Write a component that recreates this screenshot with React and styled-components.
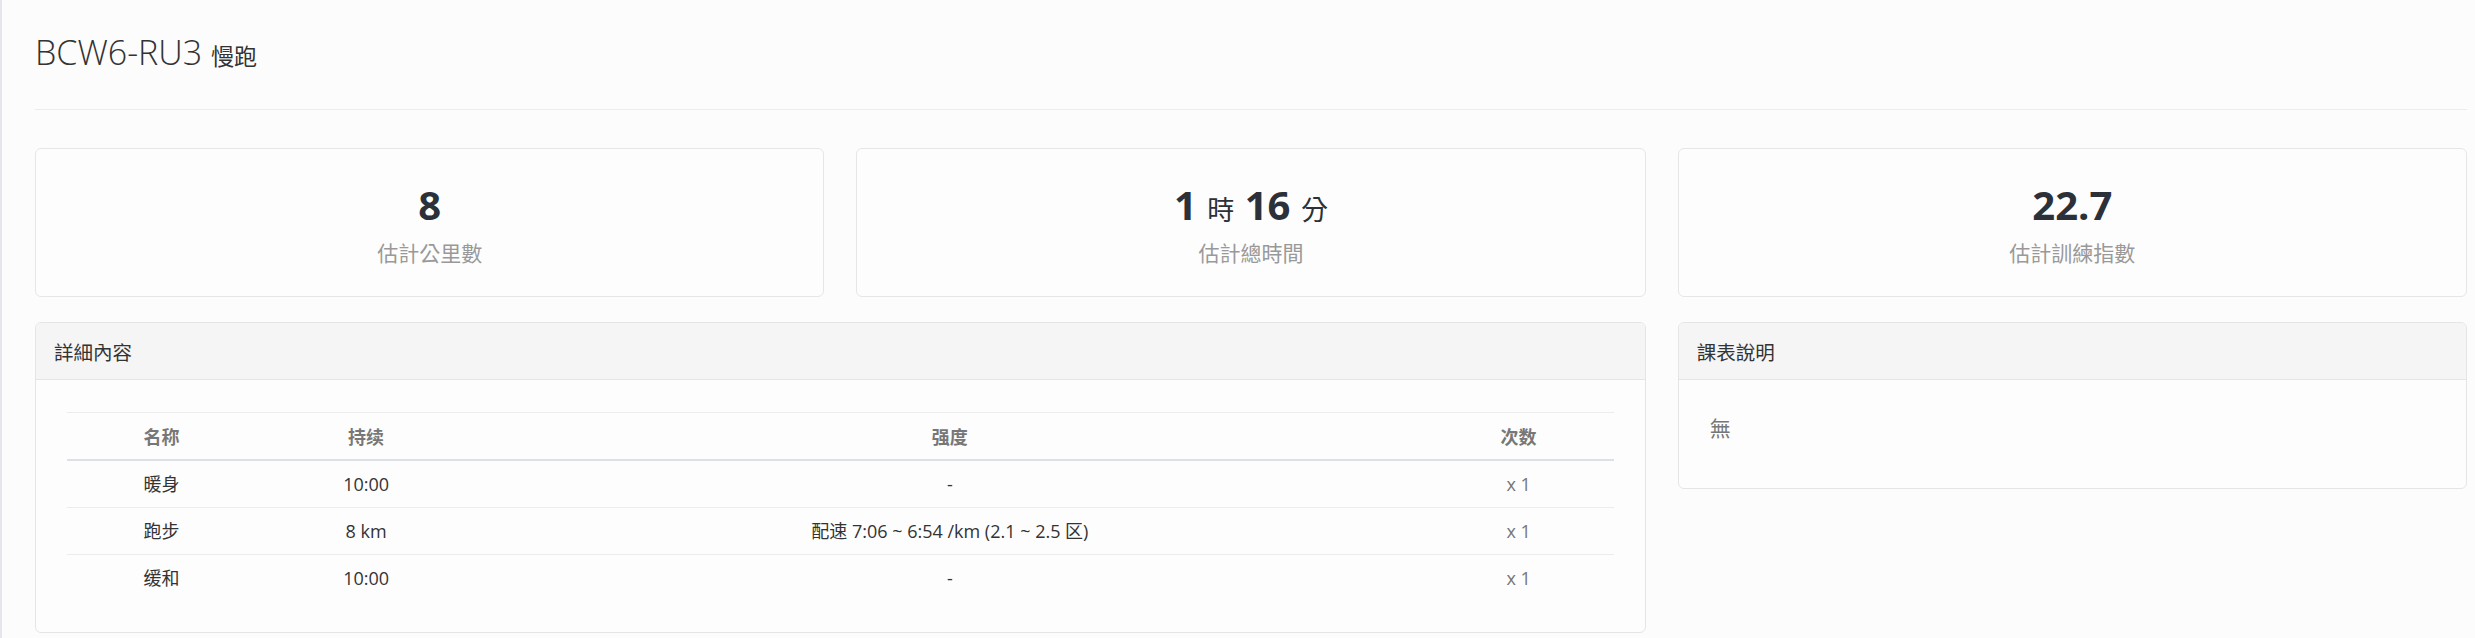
import styled, { createGlobalStyle } from "styled-components";

const GlobalStyle = createGlobalStyle`
    html, body {
        margin: 0;
        padding: 0;
        background: #fcfcfc;
    }
    body {
        font-family: "Open Sans", "Noto Sans CJK TC", sans-serif;
        color: #333;
    }
    * {
        box-sizing: border-box;
    }
`;

const Page = styled.div`
    min-height: 638px;
    border-left: 2px solid #e6e6ea;
    padding: 0 8px 0 33px;
`;

const PageHeader = styled.div`
    padding: 32px 0 37px;
    border-bottom: 1px solid #ececec;
    margin-bottom: 38px;

    & h1 {
        margin: 0;
        height: 40px;
        font-size: 34px;
        line-height: 40px;
        font-weight: 300;
        color: #333;
    }

    & h1 small {
        font-size: 23px;
        line-height: 1;
        font-weight: 400;
        color: #333;
        font-family: "Noto Sans CJK TC", sans-serif;
    }
`;

const Grid = styled.div`
    display: grid;
    grid-template-columns: repeat(3, 1fr);
    column-gap: 32px;
    align-items: start;
    margin-bottom: ${(p) => p.$mb || 0}px;
`;

const StatCard = styled.div`
    background: #fdfdfd;
    border: 1px solid #e6e6e6;
    border-radius: 6px;
    padding: 34px 15px 29px;
    text-align: center;
`;

const StatValue = styled.div`
    height: 44px;
    font-size: 40px;
    line-height: 44px;
    font-weight: 700;
    color: #2c3038;

    & span {
        font-size: 27px;
        line-height: 1;
        font-weight: 400;
        font-family: "Noto Sans CJK TC", sans-serif;
    }
`;

const StatLabel = styled.div`
    margin-top: 10px;
    height: 30px;
    font-size: 21px;
    line-height: 30px;
    color: #999;
    font-family: "Noto Sans CJK TC", sans-serif;
`;

const Panel = styled.div`
    grid-column: span ${(p) => p.$span || 1};
    background: #fdfdfd;
    border: 1px solid #e5e5e5;
    border-radius: 6px;
    overflow: hidden;
`;

const PanelHeading = styled.div`
    height: 57px;
    display: flex;
    align-items: center;
    padding: 0 18px;
    background: #f5f5f5;
    border-bottom: 1px solid #e5e5e5;
    font-size: 19.5px;
    color: #333;
    font-family: "Noto Sans CJK TC", sans-serif;
`;

const PanelBody = styled.div`
    padding: 32px 31px 31px;
`;

const Table = styled.table`
    width: 100%;
    border-collapse: collapse;
    font-size: 18px;

    & th {
        padding: 10px 8px;
        line-height: 26px;
        font-weight: 700;
        color: #777;
        text-align: center;
        border-top: 1px solid #ececec;
        border-bottom: 2px solid #dde0e4;
        font-family: "Noto Sans CJK SC", sans-serif;
    }

    & td {
        padding: 10px 8px;
        line-height: 26px;
        text-align: center;
        color: #333;
        border-top: 1px solid #ececec;
        font-family: "Open Sans", "Noto Sans CJK SC", sans-serif;
    }
`;

const Col = styled.col`
    width: ${(p) => p.$w}px;
`;

const Count = styled.td`
    && {
        color: #777;
    }
`;

const Note = styled.p`
    margin: 0 0 15px;
    font-size: 21px;
    line-height: 30px;
    color: #777;
    font-family: "Noto Sans CJK TC", sans-serif;
`;

const steps = [
    { name: "暖身", dur: "10:00", pace: "-", reps: "x 1" },
    { name: "跑步", dur: "8 km", pace: "配速 7:06 ~ 6:54 /km (2.1 ~ 2.5 区)", reps: "x 1" },
    { name: "缓和", dur: "10:00", pace: "-", reps: "x 1" },
];

export default function App() {
    return (
        <>
            <GlobalStyle />
            <Page>
                <PageHeader>
                    <h1>
                        BCW6-RU3 <small>慢跑</small>
                    </h1>
                </PageHeader>

                <Grid $mb={25}>
                    <StatCard>
                        <StatValue>8</StatValue>
                        <StatLabel>估計公里數</StatLabel>
                    </StatCard>
                    <StatCard>
                        <StatValue>
                            1 <span>時</span> 16 <span>分</span>
                        </StatValue>
                        <StatLabel>估計總時間</StatLabel>
                    </StatCard>
                    <StatCard>
                        <StatValue>22.7</StatValue>
                        <StatLabel>估計訓練指數</StatLabel>
                    </StatCard>
                </Grid>

                <Grid>
                    <Panel $span={2}>
                        <PanelHeading>詳細內容</PanelHeading>
                        <PanelBody>
                            <Table>
                                <colgroup>
                                    <Col $w={189} />
                                    <Col $w={220} />
                                    <Col $w={947} />
                                    <Col $w={190} />
                                </colgroup>
                                <thead>
                                    <tr>
                                        <th>名称</th>
                                        <th>持续</th>
                                        <th>强度</th>
                                        <th>次数</th>
                                    </tr>
                                </thead>
                                <tbody>
                                    {steps.map((s) => (
                                        <tr key={s.name}>
                                            <td>{s.name}</td>
                                            <td>{s.dur}</td>
                                            <td>{s.pace}</td>
                                            <Count>{s.reps}</Count>
                                        </tr>
                                    ))}
                                </tbody>
                            </Table>
                        </PanelBody>
                    </Panel>
                    <Panel>
                        <PanelHeading>課表說明</PanelHeading>
                        <PanelBody>
                            <Note>無</Note>
                        </PanelBody>
                    </Panel>
                </Grid>
            </Page>
        </>
    );
}
